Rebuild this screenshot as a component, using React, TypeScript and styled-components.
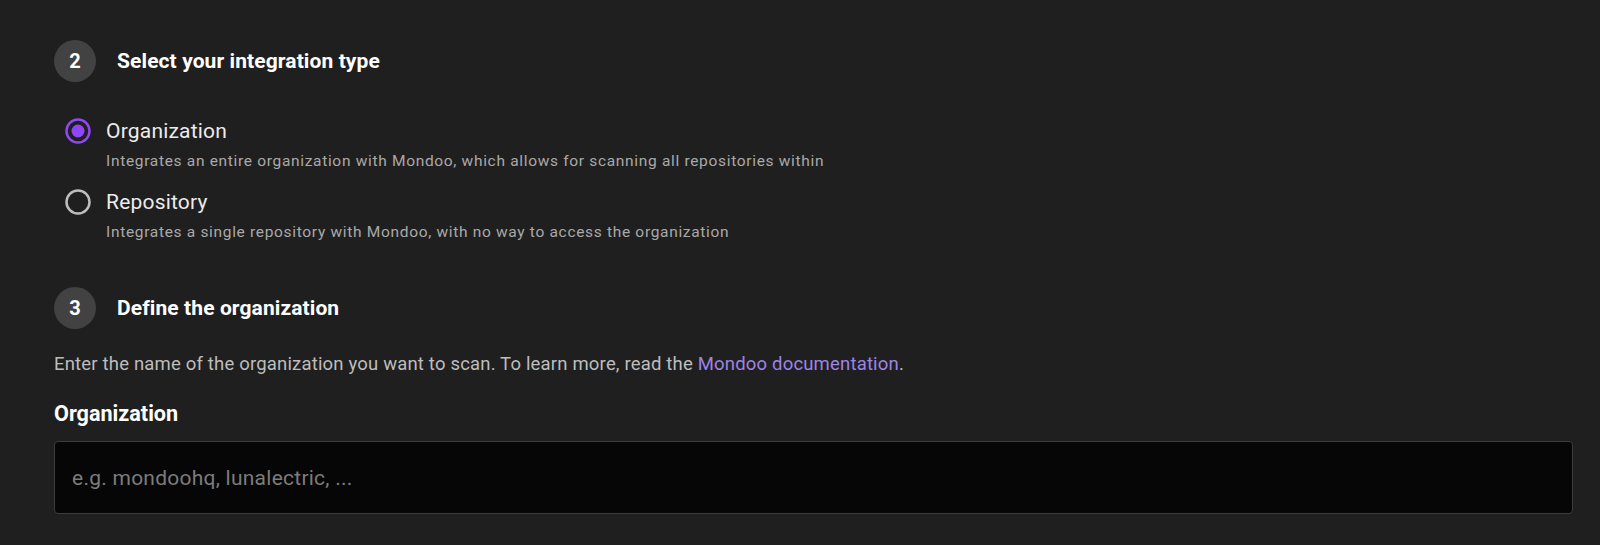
import React from "react";
import styled, { createGlobalStyle } from "styled-components";

const Global = createGlobalStyle`
  html, body { margin: 0; padding: 0; background: #201f1f; }
  body { font-family: Roboto, "Liberation Sans", sans-serif; }
  * { box-sizing: border-box; }
`;

const Page = styled.div`
  width: 1600px;
  height: 545px;
  background: #201f1f;
  padding: 40px 27px 0 54px;
  overflow: hidden;
`;

const StepHeader = styled.div<{ $mt?: number }>`
  display: flex;
  align-items: center;
  gap: 21px;
  height: 42px;
  margin-top: ${(p) => p.$mt ?? 0}px;
`;

const StepNumber = styled.div`
  width: 42px;
  height: 42px;
  border-radius: 50%;
  background: #424242;
  color: #ffffff;
  display: flex;
  align-items: center;
  justify-content: center;
  font-size: 20px;
  font-weight: 700;
`;

const StepTitle = styled.h2`
  margin: 0;
  font-size: 21px;
  line-height: 28px;
  font-weight: 700;
  color: #ffffff;
  letter-spacing: 0.1px;
`;

const OptionList = styled.div`
  display: flex;
  flex-direction: column;
  gap: 16px;
  margin-top: 34px;
  padding-left: 11px;
`;

const Option = styled.label`
  display: flex;
  flex-direction: column;
  cursor: pointer;
`;

const OptionRow = styled.div`
  display: flex;
  align-items: center;
  gap: 15px;
  height: 30px;
`;

const OptionLabel = styled.span`
  font-size: 21px;
  line-height: 30px;
  color: #ececec;
  letter-spacing: 0.2px;
`;

const OptionDesc = styled.span`
  margin-top: 5px;
  padding-left: 41px;
  line-height: 20px;
  font-size: 15.5px;
  letter-spacing: 0.68px;
  color: #a9a9a9;
`;

const Paragraph = styled.p`
  margin: 23px 0 0;
  font-size: 18.5px;
  line-height: 24px;
  color: #bdbdbd;
  letter-spacing: 0.18px;
`;

const Link = styled.a`
  color: #9d84e6;
  text-decoration: none;
`;

const FieldLabel = styled.div`
  margin-top: 26px;
  font-size: 21.6px;
  line-height: 24px;
  font-weight: 700;
  color: #ffffff;
`;

const Input = styled.input`
  display: block;
  width: 100%;
  height: 73px;
  margin-top: 15px;
  background: #060606;
  border: 1px solid #3c3c3c;
  border-radius: 4px;
  padding: 0 17px;
  font-family: Roboto, "Liberation Sans", sans-serif;
  font-size: 21px;
  color: #eee;
  outline: none;
  &::placeholder {
    color: #7c7c7c;
    letter-spacing: 0.25px;
  }
`;

const RadioIcon = ({ checked }: { checked: boolean }) => (
  <svg width="26" height="26" viewBox="0 0 26 26">
    <circle
      cx="13"
      cy="13"
      r="11.5"
      fill="none"
      stroke={checked ? "#8f47f5" : "#bdbdbd"}
      strokeWidth="2.5"
    />
    {checked && <circle cx="13" cy="13" r="6.5" fill="#8f47f5" />}
  </svg>
);

export default function App() {
  return (
    <Page>
      <Global />
      <StepHeader>
        <StepNumber>2</StepNumber>
        <StepTitle>Select your integration type</StepTitle>
      </StepHeader>
      <OptionList>
        <Option>
          <OptionRow>
            <RadioIcon checked />
            <OptionLabel>Organization</OptionLabel>
          </OptionRow>
          <OptionDesc>
            Integrates an entire organization with Mondoo, which allows for scanning all repositories within
          </OptionDesc>
        </Option>
        <Option>
          <OptionRow>
            <RadioIcon checked={false} />
            <OptionLabel>Repository</OptionLabel>
          </OptionRow>
          <OptionDesc>
            Integrates a single repository with Mondoo, with no way to access the organization
          </OptionDesc>
        </Option>
      </OptionList>
      <StepHeader $mt={45}>
        <StepNumber>3</StepNumber>
        <StepTitle>Define the organization</StepTitle>
      </StepHeader>
      <Paragraph>
        Enter the name of the organization you want to scan. To learn more, read the{" "}
        <Link href="#">Mondoo documentation</Link>.
      </Paragraph>
      <FieldLabel>Organization</FieldLabel>
      <Input placeholder="e.g. mondoohq, lunalectric, ..." />
    </Page>
  );
}
